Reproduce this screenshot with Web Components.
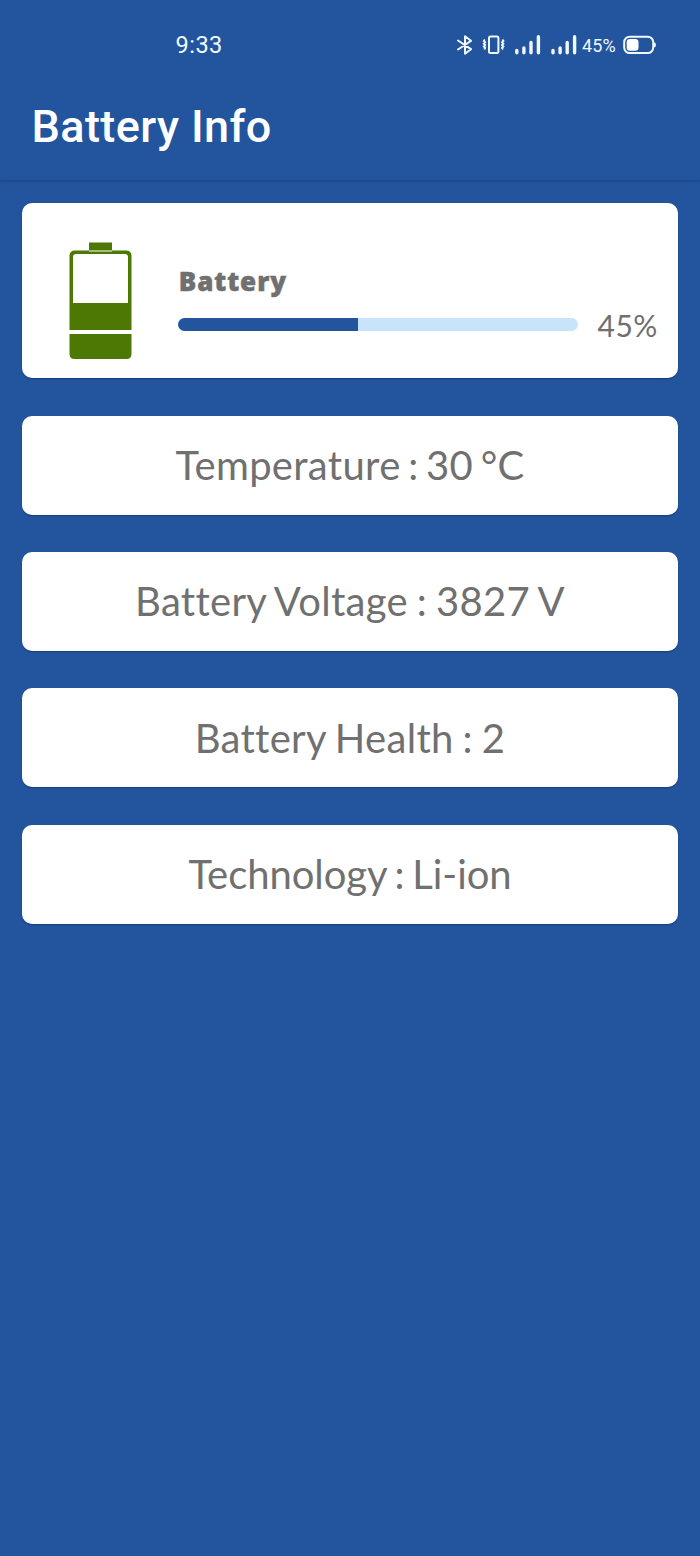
<!DOCTYPE html>
<html lang="en"><head><meta charset="utf-8"><title>Battery Info</title>
<style>html,body{margin:0;background:#22559d}</style></head>
<body>
<battery-app></battery-app>
<script>
const define = (name, html) => {
  const t = document.createElement('template');
  t.innerHTML = html;
  customElements.define(name, class extends HTMLElement {
    constructor() { super(); this.attachShadow({mode:'open'}).append(t.content.cloneNode(true)); }
  });
};

define('status-bar', `<style>
:host{display:flex;height:90px;box-sizing:border-box;padding:0 43px 0 175.5px;align-items:center;color:#f2f8ff;font-family:Roboto,sans-serif;justify-content:space-between}
.time{font-size:23.5px;letter-spacing:.5px}
.right{display:flex;align-items:center;height:24px}
.pct{font-size:18px;margin:0 5px 0 4px;letter-spacing:.1px;width:36px;white-space:nowrap}
svg{display:block;flex:none}
</style>
<span class="time">9:33</span>
<div class="right">
<svg width="126" height="24" viewBox="452 33 126 24" fill="none" stroke="#f2f8ff">
<path d="M458 40.5L471 49.2L465 53.7V36.3L471 40.8L458 49.5" stroke-width="2" stroke-linejoin="round" stroke-linecap="round"/>
<rect x="489" y="36.4" width="9.4" height="16.6" rx="1.5" stroke-width="2"/>
<path d="M484.8 39.5l-1 1.4 1.4 1.4-1.4 1.4 1.4 1.4-1.4 1.4 1.4 1.4-1 1.6M502.4 39.5l1 1.4-1.4 1.4 1.4 1.4-1.4 1.4 1.4 1.4-1.4 1.4 1 1.6" stroke-width="1.9"/>
<g stroke-width="3.4" stroke-linecap="round"><path d="M516.8 50.5v2.3M523.9 48v4.8M531 42.5v10.3M538.4 36.7v16.1M553 50.5v2.3M560.1 48v4.8M567.2 42.5v10.3M574.6 36.7v16.1"/></g>
</svg>
<span class="pct">45%</span>
<svg width="34" height="20" viewBox="0 0 34 20"><rect x="1.2" y="1.7" width="29" height="16.4" rx="5.5" fill="none" stroke="#f2f8ff" stroke-width="2"/><rect x="3.7" y="4" width="11.8" height="11.8" rx="3.3" fill="#fff"/><path d="M31 7.2q2 .3 2 2.7t-2 2.7z" fill="#f2f8ff"/></svg>
</div>`);

define('title-bar', `<style>
:host{display:flex;height:90px;box-sizing:border-box;padding:0 31.5px 17px;align-items:center;box-shadow:0 1px 3px rgba(0,20,60,.28);clip-path:inset(0 0 -6px 0)}
h1{margin:0;font:500 45px/50px Roboto,sans-serif;color:#fff;white-space:nowrap;letter-spacing:.4px}
</style><h1><slot></slot></h1>`);

define('info-card', `<style>
:host{display:flex;box-sizing:border-box;height:98.8px;padding-bottom:.4px;align-items:center;justify-content:center;background:#fff;border-radius:10px;box-shadow:0 1px 1.5px rgba(0,15,60,.35);color:#707070;font:400 40px/48px Lato,sans-serif;white-space:nowrap;letter-spacing:var(--track,.32px);word-spacing:var(--gap,-1.7px);font-variant-ligatures:none}
</style><slot></slot>`);

define('battery-icon', `<style>:host{display:block}svg{display:block}</style>
<svg width="63" height="118" viewBox="0 0 63 118" fill="#4d7804"><path d="M20 .5h23v9H20zM.5 88V14q0-5.5 5.5-5.5h51q5.5 0 5.5 5.5v74zM4 15v46h55V15q0-3-3-3H7q-3 0-3 3z" fill-rule="evenodd"/><path d="M.5 92h62v20q0 5-5 5h-52q-5 0-5-5z"/></svg>`);

define('charge-bar', `<style>
:host{display:block;height:13.5px;border-radius:7px;background:#c7e4fb;overflow:hidden}
div{width:45.1%;height:100%;background:#22559d}
</style><div></div>`);

define('battery-card', `<style>
:host{display:flex;box-sizing:border-box;height:175px;padding:38.5px 20px 0 47px;background:#fff;border-radius:10px;box-shadow:0 1px 1.5px rgba(0,15,60,.35);color:#707070}
.body{margin-left:46px;width:399.5px;padding-top:23px}
b{display:block;font:800 26px/32px "Open Sans",sans-serif;-webkit-text-stroke:.5px #707070;letter-spacing:.95px;padding-left:.7px;height:53px;white-space:nowrap}
.pct{margin:65.5px 0 0 20px;font:400 30px/36px Lato,sans-serif;letter-spacing:.5px;white-space:nowrap}
</style>
<battery-icon></battery-icon>
<div class="body"><b>Battery</b><charge-bar></charge-bar></div>
<span class="pct">45%</span>`);

define('battery-app', `<style>
:host{display:flex;flex-direction:column;min-height:1556px;background:#22559d}
main{display:flex;flex-direction:column;gap:37.5px;padding:23.4px 22px}
.temp{--gap:-3px}
.tech{--track:-.07px;--gap:-2.2px}
</style>
<status-bar></status-bar><title-bar>Battery Info</title-bar>
<main><battery-card></battery-card>
<info-card class="temp">Temperature : 30 °C</info-card>
<info-card>Battery Voltage : 3827 V</info-card>
<info-card>Battery Health : 2</info-card>
<info-card class="tech">Technology : Li-ion</info-card></main>`);
</script>
</body></html>
